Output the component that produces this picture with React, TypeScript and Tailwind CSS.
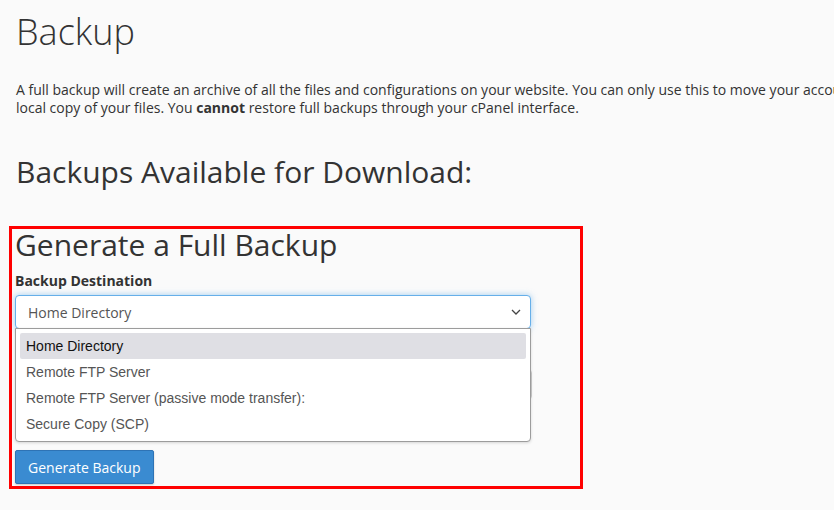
const options = [
  "Home Directory",
  "Remote FTP Server",
  "Remote FTP Server (passive mode transfer):",
  "Secure Copy (SCP)",
];

const App = () => {
  return (
    <div className="min-h-screen w-full overflow-hidden bg-[#fafafa] pl-4 font-['Open_Sans',sans-serif] text-[#333]">
      <h1 className="pt-[9px] text-[36px] font-light leading-[46px]">Backup</h1>

      <div className="mt-[26px] whitespace-nowrap text-[14px]">
        <div className="h-[17.5px] leading-[17.5px]">
          A full backup will create an archive of all the files and configurations on your website. You can only use
          this to move your account to another server, or to keep a
        </div>
        <div className="h-[17.5px] leading-[17.5px]">
          local copy of your files. You <strong className="font-bold">cannot</strong> restore full backups through
          your cPanel interface.
        </div>
      </div>

      <h2 className="mt-[36px] text-[30px] leading-[40px]">Backups Available for Download:</h2>

      <section className="-ml-[7px] mt-[34px] w-[574px] border-[3px] border-[#ff0000] pb-[2px] pl-[3px] pr-[49px]">
        <h2 className="text-[30px] leading-[32px]">Generate a Full Backup</h2>
        <label className="mt-[10px] block text-[14px] font-bold leading-[20px]">Backup Destination</label>

        <div className="relative mt-[4px]">
          <div className="flex h-[34px] w-[516px] items-center justify-between rounded-[4px] border border-[#66afe9] bg-white pl-[12px] pr-[8px] text-[14px] text-[#555] shadow-[0_0_6px_rgba(102,175,233,0.6)]">
            <span>Home Directory</span>
            <svg width="10" height="6" viewBox="0 0 10 6" fill="none" className="mr-[1px]">
              <path d="M1 1l4 4 4-4" stroke="#444" strokeWidth="1.3" />
            </svg>
          </div>

          {/* covered by the open list */}
          <div className="h-[121px] pt-[40px]">
            <div className="h-[31px] w-[517px] rounded-[4px] border border-[#ccc] bg-white" />
          </div>

          <ul className="absolute left-0 top-[33px] w-[516px] rounded-b-[4px] border border-[#9c9c9c] bg-white p-[4px] font-['Liberation_Sans',Arial,sans-serif] text-[14px] shadow-[0_1px_3px_rgba(0,0,0,0.15)]">
            {options.map((o, i) => (
              <li
                key={o}
                className={`flex h-[26px] items-center rounded-[2px] pl-[6px] ${
                  i === 0 ? "bg-[#dfdfe4] text-[#111]" : "text-[#555]"
                }`}
              >
                {o}
              </li>
            ))}
          </ul>
        </div>

        <button className="h-[34px] rounded-[2px] border border-[#2e73b5] bg-[#3a8bd1] px-[12px] text-[14px] text-white shadow-[0_1px_2px_rgba(0,0,0,0.2)]">
          Generate Backup
        </button>
      </section>
    </div>
  );
};

export default App;
